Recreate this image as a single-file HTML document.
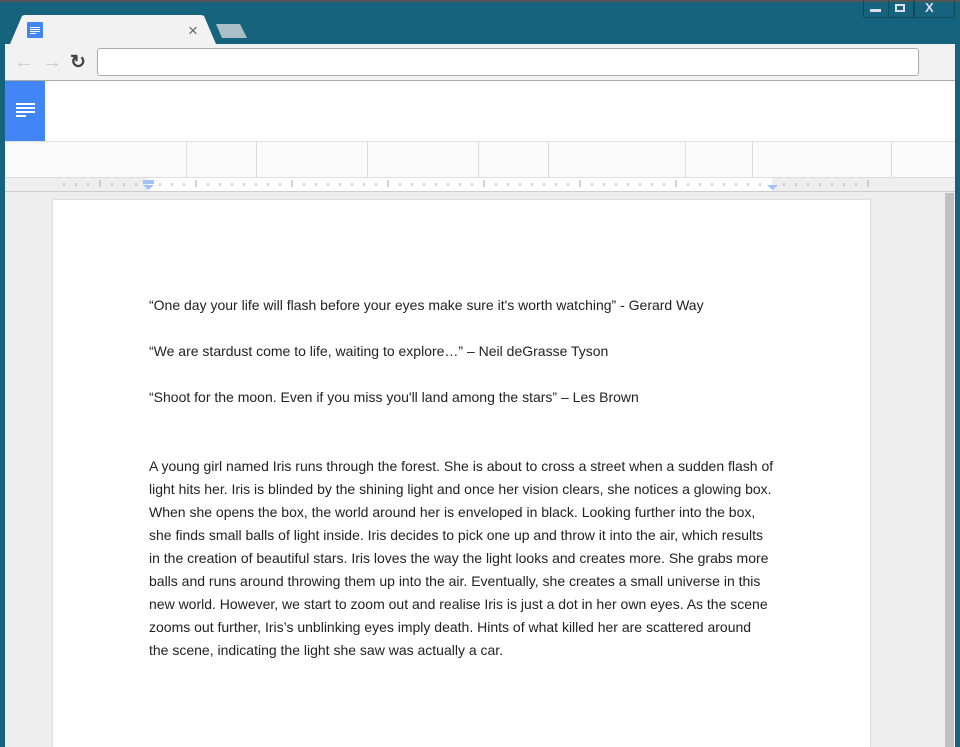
<!DOCTYPE html>
<html><head><style>
*{margin:0;padding:0;box-sizing:border-box}
body{width:960px;height:747px;overflow:hidden;background:#15637c;position:relative;font-family:"Liberation Sans",sans-serif}
.abs{position:absolute}
.line{position:absolute;left:149px;font-size:14px;color:#222;white-space:nowrap;letter-spacing:0}
</style></head><body>
<div class="abs" style="left:0;top:0;width:960px;height:2px;background:#555"></div>
<div class="abs" style="left:863px;top:1px;width:52px;height:17px;border:1px solid #0d4a5e;border-top:none;border-radius:0 0 3px 3px;"></div>
<div class="abs" style="left:888px;top:1px;width:1px;height:16px;background:#0d4a5e"></div>
<div class="abs" style="left:913px;top:1px;width:42px;height:17px;border:1px solid #0d4a5e;border-top:none;border-radius:0 0 3px 3px"></div>
<div class="abs" style="left:870px;top:9px;width:11px;height:3px;background:#dde"></div>
<div class="abs" style="left:895px;top:4px;width:10px;height:8px;border:2px solid #dde"></div>
<div class="abs" style="left:925px;top:0px;color:#dde;font-size:13px;font-weight:bold">X</div>
<svg class="abs" style="left:0;top:14px" width="260" height="32"><path d="M10 30 L22 2 Q23 1 26 1 L200 1 Q203 1 204 2 L216 30 Z" fill="#f2f2f2"/><path d="M216 10 L240 10 L247 24 L222 24 Z" fill="#a9bec6"/></svg>
<div class="abs" style="left:27px;top:22px;width:16px;height:16px;background:#4285f4;border-radius:1px"></div>
<div class="abs" style="left:30px;top:27px;width:10px;height:1px;background:#fff;box-shadow:0 2px #fff,0 4px #fff"></div>
<div class="abs" style="left:30px;top:33px;width:6px;height:1px;background:#fff"></div>
<div class="abs" style="left:188px;top:21px;color:#5a6b6b;font-size:17px">×</div>
<div class="abs" style="left:5px;top:44px;width:951px;height:37px;background:#f2f2f2;border-bottom:1px solid #aaa"></div>
<div class="abs" style="left:14px;top:51px;color:#ccc;font-size:20px">←</div>
<div class="abs" style="left:42px;top:51px;color:#ccc;font-size:20px">→</div>
<div class="abs" style="left:70px;top:51px;color:#444;font-size:19px;font-weight:bold">↻</div>
<div class="abs" style="left:97px;top:48px;width:822px;height:28px;background:#fff;border:1px solid #aaa;border-radius:3px"></div>
<div class="abs" style="left:5px;top:81px;width:951px;height:61px;background:#fff"></div>
<div class="abs" style="left:5px;top:81px;width:40px;height:60px;background:#4285f4"></div>
<div class="abs" style="left:16px;top:103px;width:19px;height:2px;background:#fff;box-shadow:0 4px #fff,0 8px #fff"></div>
<div class="abs" style="left:16px;top:115px;width:10px;height:2px;background:#fff"></div>
<div class="abs" style="left:5px;top:141px;width:951px;height:37px;background:#fafafa;border-top:1px solid #e0e0e0;border-bottom:1px solid #ddd"></div>
<div class="abs" style="left:186px;top:142px;width:1px;height:35px;background:#ddd"></div>
<div class="abs" style="left:256px;top:142px;width:1px;height:35px;background:#ddd"></div>
<div class="abs" style="left:367px;top:142px;width:1px;height:35px;background:#ddd"></div>
<div class="abs" style="left:478px;top:142px;width:1px;height:35px;background:#ddd"></div>
<div class="abs" style="left:548px;top:142px;width:1px;height:35px;background:#ddd"></div>
<div class="abs" style="left:685px;top:142px;width:1px;height:35px;background:#ddd"></div>
<div class="abs" style="left:752px;top:142px;width:1px;height:35px;background:#ddd"></div>
<div class="abs" style="left:891px;top:142px;width:1px;height:35px;background:#ddd"></div>
<div class="abs" style="left:5px;top:178px;width:951px;height:14px;background:#eee;border-bottom:1px solid #ccc"></div>
<div class="abs" style="left:148px;top:178px;width:624px;height:13px;background:#fff"></div>
<svg class="abs" style="left:0;top:178px" width="960" height="14">
<g stroke="#aaa" stroke-width="1">
<path d="M64 5v3M76 5v3M88 5v3M100 2v7M112 5v3M124 5v3M136 5v3M160 5v3M172 5v3M184 5v3M196 2v7M208 5v3M220 5v3M232 5v3M244 5v3M256 5v3M268 5v3M280 5v3M292 2v7M304 5v3M316 5v3M328 5v3M340 5v3M352 5v3M364 5v3M376 5v3M388 2v7M400 5v3M412 5v3M424 5v3M436 5v3M448 5v3M460 5v3M472 5v3M484 2v7M496 5v3M508 5v3M520 5v3M532 5v3M544 5v3M556 5v3M568 5v3M580 2v7M592 5v3M604 5v3M616 5v3M628 5v3M640 5v3M652 5v3M664 5v3M676 2v7M688 5v3M700 5v3M712 5v3M724 5v3M736 5v3M748 5v3M760 5v3M784 5v3M796 5v3M808 5v3M820 5v3M832 5v3M844 5v3M856 5v3M868 2v7"/></g>
<rect x="143" y="2" width="11" height="4" fill="#a1c2fa"/><path d="M143 7h11l-5.5 5z" fill="#a1c2fa"/><path d="M767 7h11l-5.5 5z" fill="#a1c2fa"/></svg>
<div class="abs" style="left:5px;top:192px;width:951px;height:555px;background:#eee"></div>
<div class="abs" style="left:945px;top:193px;width:9px;height:554px;background:#c1c1c1"></div>
<div class="abs" style="left:53px;top:200px;width:817px;height:547px;background:#fff;box-shadow:0 0 2px #bbb"></div>
<div class="abs" style="left:955px;top:44px;width:5px;height:703px;background:#15637c"></div>
<div class="abs" style="left:0;top:44px;width:5px;height:703px;background:#15637c"></div>
<div class="line" style="top:297px">“One day your life will flash before your eyes make sure it's worth watching” - Gerard Way</div>
<div class="line" style="top:343px">“We are stardust come to life, waiting to explore…” – Neil deGrasse Tyson</div>
<div class="line" style="top:389px">“Shoot for the moon. Even if you miss you'll land among the stars” – Les Brown</div>
<div class="line" style="top:458px">A young girl named Iris runs through the forest. She is about to cross a street when a sudden flash of</div>
<div class="line" style="top:481px">light hits her. Iris is blinded by the shining light and once her vision clears, she notices a glowing box.</div>
<div class="line" style="top:504px">When she opens the box, the world around her is enveloped in black. Looking further into the box,</div>
<div class="line" style="top:527px">she finds small balls of light inside. Iris decides to pick one up and throw it into the air, which results</div>
<div class="line" style="top:550px">in the creation of beautiful stars. Iris loves the way the light looks and creates more. She grabs more</div>
<div class="line" style="top:573px">balls and runs around throwing them up into the air. Eventually, she creates a small universe in this</div>
<div class="line" style="top:596px">new world. However, we start to zoom out and realise Iris is just a dot in her own eyes. As the scene</div>
<div class="line" style="top:619px">zooms out further, Iris’s unblinking eyes imply death. Hints of what killed her are scattered around</div>
<div class="line" style="top:642px">the scene, indicating the light she saw was actually a car.</div>
</body></html>
